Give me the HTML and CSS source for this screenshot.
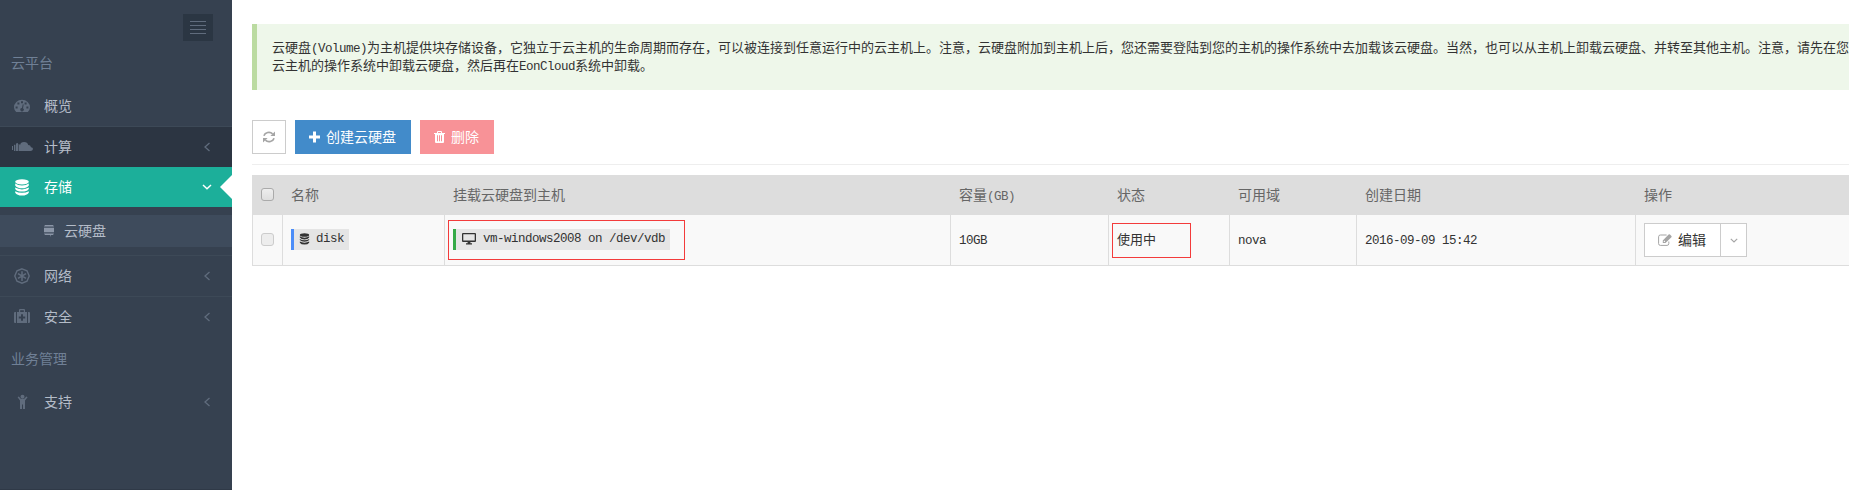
FILE: index.html
```
<!DOCTYPE html>
<html lang="zh-CN">
<head>
<meta charset="utf-8">
<title>云硬盘</title>
<link rel="stylesheet" href="styles.css">
</head>
<body>
<svg class="defs" width="0" height="0">
  <symbol id="chev-left" viewBox="0 0 8 10"><path class="line" d="M6.5 1 L2 5 L6.5 9" stroke-width="1.3"/></symbol>
  <symbol id="chev-down" viewBox="0 0 10 6"><path class="line" d="M1 1 L5 4.7 L9 1" stroke-width="1.5"/></symbol>
  <symbol id="database" viewBox="0 0 16 17">
    <ellipse cx="8" cy="2.8" rx="6.8" ry="2.6"/>
    <path d="M1.2 4.6 Q4 6.6 8 6.6 T14.8 4.6 V6.4 Q13 9.2 8 9.2 T1.2 6.4Z M1.2 8.6 Q4 10.4 8 10.4 T14.8 8.6 V10 Q13 12.6 8 12.6 T1.2 10Z M1.2 12.2 Q4 13.8 8 13.8 T14.8 12.2 V13.8 Q13 16.6 8 16.6 T1.2 13.8Z"/>
  </symbol>
</svg>
<div class="page">
  <aside class="sidebar">
    <div class="toggler"><i></i><i></i><i></i><i></i></div>
    <h3 class="heading">云平台</h3>
    <a class="item">
      <svg class="icon" viewBox="0 0 16 16"><path fill-rule="evenodd" d="M2.2 14 Q0 11.5 0 9.5 A8 7.8 0 0 1 16 9.5 Q16 11.5 13.8 14Z M7 3.2h2v2H7z M3.4 4.6h2v2h-2z M1.6 8.6h2v2h-2z M12.4 8.6h2v2h-2z M10.6 4.6h2v2h-2z M8.8 6.2 L7.9 9.9 A1.7 1.7 0 1 0 9 10.2 L9.7 6.5Z"/></svg>
      <span class="label">概览</span>
    </a>
    <a class="item open ruled">
      <svg class="icon wide" viewBox="0 0 21 10"><path d="M0 4h1v4H0z M2 2.7h1.4V9H2z M4 1.5 L6 1V9H4z M6.6 2 Q7.6 2 8 3.2 Q8.6 0 12 0 Q15.6 0 16.2 3 Q18.6 3 19 5.2 Q21 5.4 21 7 Q20.6 9 18.6 9H6.6z"/></svg>
      <span class="label">计算</span>
      <svg class="arrow"><use href="#chev-left"/></svg>
    </a>
    <a class="item active">
      <svg class="icon"><use href="#database"/></svg>
      <span class="label">存储</span>
      <svg class="arrow down"><use href="#chev-down"/></svg>
    </a>
    <div class="submenu">
      <a class="subitem">
        <svg class="subicon" viewBox="0 0 10 12"><path d="M1 0h8l1 1.6H0z M0 2.8h10v4.4H0z M0 8.4h10L9 10H6.8L6 12V10H1z"/></svg>
        <span class="label">云硬盘</span>
      </a>
    </div>
    <a class="item ruled">
      <svg class="icon" viewBox="0 0 16 16"><path class="line" d="M8 .8 L13 2.8 L15.2 8 L13 13.2 L8 15.2 L3 13.2 L.8 8 L3 2.8Z" stroke-width="1.4"/><path class="line" d="M8 3.2V13 M4 5.6 L12 10.4 M12 5.6 L4 10.4" stroke-width="1.5"/></svg>
      <span class="label">网络</span>
      <svg class="arrow"><use href="#chev-left"/></svg>
    </a>
    <a class="item ruled">
      <svg class="icon" viewBox="0 0 16 16"><path fill-rule="evenodd" d="M0 4 Q0 3 1 3 H2V14H1Q0 14 0 13Z M14 3h1q1 0 1 1v9q0 1-1 1h-1z M3 3H5V1Q5 0 6 0H10Q11 0 11 1V3H13V14H3Z M6.2 1.3V3H9.8V1.3Z M7 5.2V7.5H4.8V9.5H7V11.8H9V9.5H11.2V7.5H9V5.2Z"/></svg>
      <span class="label">安全</span>
      <svg class="arrow"><use href="#chev-left"/></svg>
    </a>
    <h3 class="heading">业务管理</h3>
    <a class="item">
      <svg class="icon" viewBox="0 0 16 16"><circle cx="8.5" cy="2.8" r="2"/><path d="M3.6 3.2 L4.8 2.4 L7 5H10L12.4 2.4L13.6 3.2L11 6.5V15H9V10.5H8V15H6V6.5Z"/></svg>
      <span class="label">支持</span>
      <svg class="arrow"><use href="#chev-left"/></svg>
    </a>
  </aside>

  <main class="content">
    <div class="note">云硬盘<span class="latin">(Volume)</span>为主机提供块存储设备，它独立于云主机的生命周期而存在，可以被连接到任意运行中的云主机上。注意，云硬盘附加到主机上后，您还需要登陆到您的主机的操作系统中去加载该云硬盘。当然，也可以从主机上卸载云硬盘、并转至其他主机。注意，请先在您<br>云主机的操作系统中卸载云硬盘，然后再在<span class="latin">EonCloud</span>系统中卸载。</div>

    <div class="toolbar">
      <button class="btn btn-default btn-icon"><svg width="12" height="12" viewBox="0 0 12 12"><path class="line" d="M.9 4.8 A5.2 4.8 0 0 1 9.6 2.8 M11.1 7.2 A5.2 4.8 0 0 1 2.4 9.2" stroke-width="1.7"/><path d="M12 .4V5H7.4Z M0 11.6V7H4.6Z"/></svg></button>
      <button class="btn btn-primary"><svg width="11" height="12" viewBox="0 0 11 12"><path d="M4 .5h3v4h4v3H7v4H4v-4H0v-3h4z"/></svg><span class="label">创建云硬盘</span></button>
      <button class="btn btn-danger"><svg width="11" height="12" viewBox="0 0 11 12"><path fill-rule="evenodd" d="M0 2h3V1q0-1 1-1h3q1 0 1 1v1h3v1H10v8q0 1-1 1H2q-1 0-1-1V3H0z M4 1v1h3V1z M3 4.2v6h1v-6z M5 4.2v6h1v-6z M7 4.2v6h1v-6z"/></svg><span class="label">删除</span></button>
    </div>

    <table class="grid">
      <colgroup><col class="c-check"><col class="c-name"><col class="c-host"><col class="c-size"><col class="c-state"><col class="c-zone"><col class="c-date"><col></colgroup>
      <thead>
        <tr><th><input type="checkbox"></th><th>名称</th><th>挂载云硬盘到主机</th><th>容量<span class="latin">(GB)</span></th><th>状态</th><th>可用域</th><th>创建日期</th><th>操作</th></tr>
      </thead>
      <tbody>
        <tr>
          <td><input type="checkbox" class="dim"></td>
          <td><span class="tag tag-blue"><svg width="11" height="12"><use href="#database"/></svg><span class="latin">disk</span></span></td>
          <td class="marked"><span class="tag tag-green"><svg width="14" height="12" viewBox="0 0 14 12"><path fill-rule="evenodd" d="M1 0h12q1 0 1 1v7q0 1-1 1H8.4v1.2H10V11.5H4V10.2H5.6V9H1Q0 9 0 8V1Q0 0 1 0z M1.3 1.3v6.2h11.4V1.3z"/></svg><span class="latin">vm-windows2008 on /dev/vdb</span></span><i class="mark mark-host"></i></td>
          <td><span class="latin">10GB</span></td>
          <td class="marked">使用中<i class="mark mark-state"></i></td>
          <td><span class="latin">nova</span></td>
          <td><span class="latin">2016-09-09 15:42</span></td>
          <td class="actions">
            <div class="group">
              <button class="btn btn-default btn-edit"><svg width="14" height="12" viewBox="0 0 14 12"><path class="line" d="M10.8 7.5V9.6Q10.8 11.4 9 11.4H2.4Q.6 11.4 .6 9.6V2.8Q.6 1 2.4 1H8.6"/><path fill-rule="evenodd" d="M4.8 9V6.4L10.6 .6Q11.3 0 12 .6L13.4 1.9Q14 2.6 13.4 3.3L7.5 9Z M5.8 7V8H6.8L7.2 7.6L6.2 6.6Z"/></svg><span class="label">编辑</span></button>
              <button class="btn btn-default btn-drop"><svg width="8" height="5" viewBox="0 0 10 6"><use href="#chev-down"/></svg></button>
            </div>
          </td>
        </tr>
      </tbody>
    </table>
  </main>
</div>
</body>
</html>
```
FILE: styles.css
```
* { box-sizing: border-box; }

body {
  margin: 0;
  background: #fff;
  color: #333;
  font: 13px/18px "Noto Sans CJK SC", sans-serif;
  overflow: hidden;
}

svg { display: block; flex: none; fill: currentColor; }
.line { fill: none; stroke: currentColor; }
.defs { position: absolute; }

.latin {
  font-family: "Liberation Mono", monospace;
  font-size: 12.5px;
  letter-spacing: -0.5px;
  line-height: 1;
  white-space: pre;
}

.page { display: flex; height: 490px; }

/* Sidebar */
.sidebar {
  flex: none;
  width: 232px;
  display: flex;
  flex-direction: column;
  background: #364150;
  border-bottom: 1px solid #2f3947;
  color: #b4bcc8;
  font-size: 14px;
}

.toggler {
  align-self: flex-end;
  display: flex;
  flex-direction: column;
  gap: 3px;
  width: 30px;
  height: 27px;
  margin: 14px 19px 0 0;
  padding: 7px;
  background: #2b3643;
}
.toggler i { height: 1px; background: #606c7d; }

.heading {
  flex: none;
  height: 45px;
  margin: 0;
  padding: 10px 11px 0;
  color: #708096;
  font-size: 14px;
  font-weight: 400;
  line-height: 22px;
}

.label { padding-bottom: 2px; }

.item {
  position: relative;
  display: flex;
  flex: none;
  align-items: center;
  height: 40px;
  padding: 0 20px 0 14px;
}
.item.ruled { height: 41px; border-top: 1px solid #3d4957; }
.item.open { background: #2c3542; }
.item.active { background: #1caf9a; color: #fff; }

.icon { width: 16px; height: 16px; margin-right: 14px; color: #606c7d; }
.icon.wide { width: 21px; height: 10px; margin: 0 11px 0 -2px; }
.active .icon { width: 16px; height: 17px; color: #fff; }

.arrow { width: 8px; height: 10px; margin: 0 1px 0 auto; color: #606c7d; }
.arrow.down { width: 10px; height: 6px; margin: 0 0 0 auto; color: #fff; }

.active::after {
  content: "";
  position: absolute;
  top: 8px;
  right: 0;
  width: 12px;
  height: 24px;
  background: #fff;
  clip-path: polygon(100% 0, 0 50%, 100% 100%);
}

.submenu { padding: 8px 0; }
.subitem {
  display: flex;
  align-items: center;
  gap: 10px;
  height: 32px;
  padding-left: 44px;
  background: #3e4b5c;
}
.subicon { width: 10px; height: 12px; color: #8b96a7; }

/* Content */
.content { flex: 1; min-width: 0; padding: 24px 0 0 20px; }

.note {
  height: 66px;
  padding: 14px 0 0 15px;
  border-left: 5px solid #bbdba1;
  background: #eef7ea;
  white-space: nowrap;
  overflow: hidden;
}

.toolbar {
  display: flex;
  gap: 9px;
  height: 45px;
  margin: 30px 0 10px;
  border-bottom: 1px solid #eee;
}

.btn {
  display: flex;
  align-items: center;
  gap: 6px;
  height: 34px;
  padding: 0 14px;
  border: 0;
  color: #fff;
  font: 14px/20px "Noto Sans CJK SC", sans-serif;
  white-space: nowrap;
}
.btn-primary { width: 116px; background: #428bca; }
.btn-danger { width: 74px; background: #f89297; }
.btn-default { border: 1px solid #ccc; background: #fff; color: #333; }
.btn-default svg { color: #a5a5a5; }
.btn-icon { width: 34px; padding: 0 10px; }
.btn-edit { width: 77px; padding: 0 13px; }
.btn-drop { width: 27px; margin-left: -1px; padding: 0 9px; }
.group { display: flex; }

/* Table */
.grid {
  width: 100%;
  table-layout: fixed;
  border-collapse: separate;
  border-spacing: 0;
}
.c-check { width: 30px; }
.c-name { width: 162px; }
.c-host { width: 506px; }
.c-size { width: 158px; }
.c-state { width: 121px; }
.c-zone { width: 127px; }
.c-date { width: 279px; }

th, td { padding: 0 0 2px 8px; border-left: 1px solid #ddd; text-align: left; vertical-align: middle; white-space: nowrap; }
th { height: 40px; background: #ddd; color: #666; font-size: 14px; font-weight: 400; }
td { height: 51px; background: #f9f9f9; border-bottom: 1px solid #ddd; }
td.actions { padding-bottom: 0; }
th:first-child, td:first-child { padding-left: 8px; }

input {
  appearance: none;
  display: block;
  width: 13px;
  height: 13px;
  margin: 0;
  border: 1px solid #aaa;
  border-radius: 3px;
  background: linear-gradient(#eee, #dedede);
}
input.dim { border-color: #ccc; background: #ededed; }

.tag {
  display: inline-flex;
  align-items: center;
  gap: 6px;
  height: 21px;
  padding: 0 5px 0 5px;
  border-left: 3px solid;
  background: #e5e5e5;
  vertical-align: middle;
}
.tag > * { color: #333; }
.tag-blue { border-color: #4b8df8; }
.tag-green { gap: 7px; padding-left: 6px; border-color: #35aa47; }

/* Highlight frames drawn over the cells */
.marked { position: relative; }
.mark { position: absolute; border: 1px solid #f33b3b; }
.mark-host { left: 3px; top: 5px; width: 237px; height: 40px; }
.mark-state { left: 3px; top: 8px; width: 79px; height: 35px; }
```
